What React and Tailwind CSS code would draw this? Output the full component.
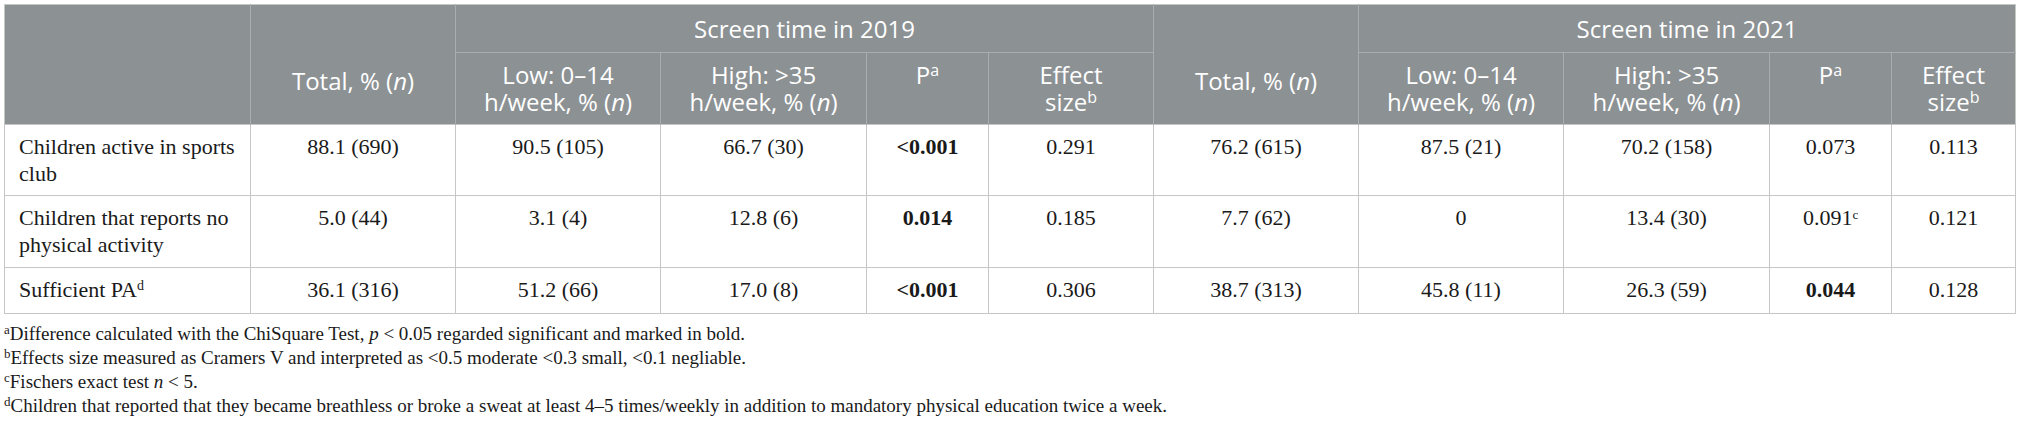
import React from "react";

const serif = { fontFamily: '"Liberation Serif", "Times New Roman", serif' };

const rows = [
  {
    label: "Children active in sports club",
    cells: ["88.1 (690)", "90.5 (105)", "66.7 (30)", <b>&lt;0.001</b>, "0.291", "76.2 (615)", "87.5 (21)", "70.2 (158)", "0.073", "0.113"],
    h: "h-[71px]",
  },
  {
    label: "Children that reports no physical activity",
    cells: ["5.0 (44)", "3.1 (4)", "12.8 (6)", <b>0.014</b>, "0.185", "7.7 (62)", "0", "13.4 (30)", <span>0.091<sup className="text-[13px]">c</sup></span>, "0.121"],
    h: "h-[72px]",
  },
  {
    label: (
      <span>
        Sufficient PA<sup className="text-[14px]">d</sup>
      </span>
    ),
    cells: ["36.1 (316)", "51.2 (66)", "17.0 (8)", <b>&lt;0.001</b>, "0.306", "38.7 (313)", "45.8 (11)", "26.3 (59)", <b>0.044</b>, "0.128"],
    h: "h-[46px]",
  },
];

const N = () => <i>n</i>;

const Sub = ({ children }) => <sup className="text-[16px]">{children}</sup>;

const App = () => {
  return (
    <div className="w-[2020px] h-[426px] bg-white pt-[4px] pl-[4px]">
      <table className="table-fixed border-collapse w-[2011px] border border-[#c5c8c3]">
        <colgroup>
          <col className="w-[246px]" />
          <col className="w-[205px]" />
          <col className="w-[205px]" />
          <col className="w-[206px]" />
          <col className="w-[122px]" />
          <col className="w-[165px]" />
          <col className="w-[205px]" />
          <col className="w-[205px]" />
          <col className="w-[206px]" />
          <col className="w-[122px]" />
          <col className="w-[124px]" />
        </colgroup>
        <thead
          className="bg-[#8c9194] text-white text-[24px] leading-[27px] font-normal"
          style={{ fontFamily: '"Open Sans", "Noto Sans", sans-serif' }}
        >
          <tr className="h-[48px]">
            <th rowSpan={2} className="border-r border-[#a9adb0]"></th>
            <th className="border-r border-[#a9adb0]"></th>
            <th colSpan={4} className="font-normal border-r border-b border-[#a9adb0]">
              Screen time in 2019
            </th>
            <th className="border-r border-[#a9adb0]"></th>
            <th colSpan={4} className="font-normal border-b border-[#a9adb0]">
              Screen time in 2021
            </th>
          </tr>
          <tr className="h-[72px]">
            <th className="font-normal align-top pt-[14px] border-r border-[#a9adb0]">
              Total, % (<N />)
            </th>
            <th className="font-normal align-top pt-[8px] border-r border-[#a9adb0]">
              Low: 0–14
              <br />
              h/week, % (<N />)
            </th>
            <th className="font-normal align-top pt-[8px] border-r border-[#a9adb0]">
              High: &gt;35
              <br />
              h/week, % (<N />)
            </th>
            <th className="font-normal align-top pt-[8px] border-r border-[#a9adb0]">
              P<Sub>a</Sub>
            </th>
            <th className="font-normal align-top pt-[8px] border-r border-[#a9adb0]">
              Effect
              <br />
              size<Sub>b</Sub>
            </th>
            <th className="font-normal align-top pt-[14px] border-r border-[#a9adb0]">
              Total, % (<N />)
            </th>
            <th className="font-normal align-top pt-[8px] border-r border-[#a9adb0]">
              Low: 0–14
              <br />
              h/week, % (<N />)
            </th>
            <th className="font-normal align-top pt-[8px] border-r border-[#a9adb0]">
              High: &gt;35
              <br />
              h/week, % (<N />)
            </th>
            <th className="font-normal align-top pt-[8px] border-r border-[#a9adb0]">
              P<Sub>a</Sub>
            </th>
            <th className="font-normal align-top pt-[8px]">
              Effect
              <br />
              size<Sub>b</Sub>
            </th>
          </tr>
        </thead>
        <tbody className="text-[22px] leading-[27px] text-[#1a1a1a]" style={serif}>
          {rows.map((r, i) => (
            <tr key={i} className={r.h}>
              <td className="border border-[#c6c6c6] align-top pt-[8px] pl-[14px] pr-[4px] text-left">
                {r.label}
              </td>
              {r.cells.map((c, j) => (
                <td key={j} className="border border-[#c6c6c6] align-top pt-[8px] text-center">
                  {c}
                </td>
              ))}
            </tr>
          ))}
        </tbody>
      </table>
      <div className="pt-[8px] text-[19px] leading-[24px] text-[#1a1a1a]" style={serif}>
        <p>
          <sup className="text-[13px]">a</sup>Difference calculated with the ChiSquare Test, <i>p</i> &lt; 0.05 regarded
          significant and marked in bold.
        </p>
        <p>
          <sup className="text-[13px]">b</sup>Effects size measured as Cramers V and interpreted as &lt;0.5 moderate
          &lt;0.3 small, &lt;0.1 negliable.
        </p>
        <p>
          <sup className="text-[13px]">c</sup>Fischers exact test <i>n</i> &lt; 5.
        </p>
        <p>
          <sup className="text-[13px]">d</sup>Children that reported that they became breathless or broke a sweat at
          least 4–5 times/weekly in addition to mandatory physical education twice a week.
        </p>
      </div>
    </div>
  );
};

export default App;
